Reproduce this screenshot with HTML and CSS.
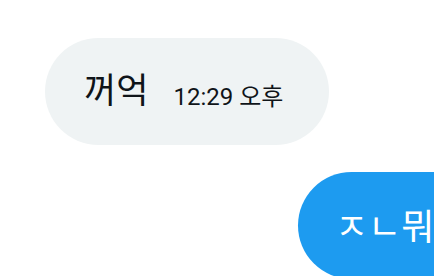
FILE: index.html
```html
<!DOCTYPE html>
<html lang="ko">
<head>
    <meta charset="UTF-8">
    <meta name="viewport" content="width=device-width, initial-scale=1.0">
    <title>대화</title>
    <link rel="stylesheet" href="styles.css">
</head>
<body>
    <div class="chat">
        <div class="msg msg-recebida">
            <span class="msg-texto">꺼억</span>
            <span class="msg-hora">12:29 오후</span>
        </div>
        <div class="msg msg-enviada">
            <span class="msg-texto">ㅈㄴ뭐</span>
        </div>
    </div>
</body>
</html>
```

FILE: styles.css
```css
body {
    margin: 0;
    padding: 0;
    background-color: #fff;
    font-family: "Noto Sans CJK KR", "Noto Sans", sans-serif;
    color: #0f1419;
    overflow: hidden;
}

.chat {
    display: flex;
    flex-direction: column;
    padding: 38px 0 0 45px;
    gap: 27px;
    width: 520px;
}

.msg {
    display: flex;
    align-items: center;
    height: 107px;
    box-sizing: border-box;
    border-radius: 54px;
}

.msg-recebida {
    align-self: flex-start;
    background-color: #eff3f4;
    padding: 0 46px 0 39px;
    gap: 25px;
}

.msg-recebida .msg-texto {
    font-size: 35px;
    margin-top: -8px;
}

.msg-hora {
    font-family: Roboto, "Noto Sans CJK KR", sans-serif;
    font-size: 24px;
    margin-top: 6px;
}

.msg-enviada {
    align-self: flex-start;
    margin-left: 253px;
    width: 240px;
    background-color: #1d9bf0;
    color: #fff;
    padding-left: 37px;
}

.msg-enviada .msg-texto {
    font-size: 36px;
    margin-top: -4px;
}
```
